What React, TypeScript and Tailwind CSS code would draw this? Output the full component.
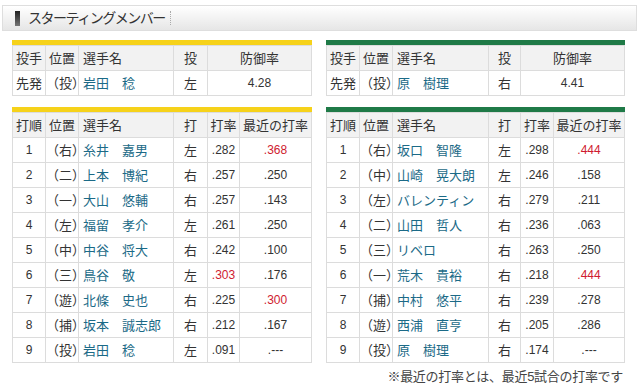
type Batter = {
  order: number
  pos: string
  name: string
  hand: string
  avg: string
  recent: string
  avgHot?: boolean
  recentHot?: boolean
}

type Side = {
  accent: string
  pitcher: { name: string; hand: string; era: string }
  batters: Batter[]
}

const tigers: Side = {
  accent: 'bg-[#f6d21a]',
  pitcher: { name: '岩田　稔', hand: '左', era: '4.28' },
  batters: [
    { order: 1, pos: '（右）', name: '糸井　嘉男', hand: '左', avg: '.282', recent: '.368', recentHot: true },
    { order: 2, pos: '（二）', name: '上本　博紀', hand: '右', avg: '.257', recent: '.250' },
    { order: 3, pos: '（一）', name: '大山　悠輔', hand: '右', avg: '.257', recent: '.143' },
    { order: 4, pos: '（左）', name: '福留　孝介', hand: '左', avg: '.261', recent: '.250' },
    { order: 5, pos: '（中）', name: '中谷　将大', hand: '右', avg: '.242', recent: '.100' },
    { order: 6, pos: '（三）', name: '鳥谷　敬', hand: '左', avg: '.303', recent: '.176', avgHot: true },
    { order: 7, pos: '（遊）', name: '北條　史也', hand: '右', avg: '.225', recent: '.300', recentHot: true },
    { order: 8, pos: '（捕）', name: '坂本　誠志郎', hand: '右', avg: '.212', recent: '.167' },
    { order: 9, pos: '（投）', name: '岩田　稔', hand: '左', avg: '.091', recent: '.---' },
  ],
}

const swallows: Side = {
  accent: 'bg-[#1f7a47]',
  pitcher: { name: '原　樹理', hand: '右', era: '4.41' },
  batters: [
    { order: 1, pos: '（右）', name: '坂口　智隆', hand: '左', avg: '.298', recent: '.444', recentHot: true },
    { order: 2, pos: '（中）', name: '山崎　晃大朗', hand: '左', avg: '.246', recent: '.158' },
    { order: 3, pos: '（左）', name: 'バレンティン', hand: '右', avg: '.279', recent: '.211' },
    { order: 4, pos: '（二）', name: '山田　哲人', hand: '右', avg: '.236', recent: '.063' },
    { order: 5, pos: '（三）', name: 'リベロ', hand: '右', avg: '.263', recent: '.250' },
    { order: 6, pos: '（一）', name: '荒木　貴裕', hand: '右', avg: '.218', recent: '.444', recentHot: true },
    { order: 7, pos: '（捕）', name: '中村　悠平', hand: '右', avg: '.239', recent: '.278' },
    { order: 8, pos: '（遊）', name: '西浦　直亨', hand: '右', avg: '.205', recent: '.286' },
    { order: 9, pos: '（投）', name: '原　樹理', hand: '右', avg: '.174', recent: '.---' },
  ],
}

const th = 'h-[25px] border border-[#dcdcdc] bg-[#f2f2f2] font-normal p-0'
const td = 'h-[25px] border border-[#dcdcdc] bg-white p-0'
const num = 'text-[12px]'
const hot = 'text-[#cf1b30]'

function PitcherTable({ side, widths }: { side: Side; widths: number[] }) {
  const { pitcher } = side
  return (
    <div>
      <div className={`h-[5px] ${side.accent}`} />
      <table className="w-full table-fixed border-collapse">
        <colgroup>
          {widths.map((w, i) => (
            <col key={i} style={{ width: w }} />
          ))}
          <col />
        </colgroup>
        <thead>
          <tr>
            <th className={`${th} pl-[3px] text-left`}>投手</th>
            <th className={`${th} pl-[3px] text-left`}>位置</th>
            <th className={`${th} pl-[4px] text-left`}>選手名</th>
            <th className={`${th} text-center`}>投</th>
            <th className={`${th} text-center`}>防御率</th>
          </tr>
        </thead>
        <tbody>
          <tr>
            <td className={`${td} pl-[3px]`}>先発</td>
            <td className={`${td} whitespace-nowrap`}>（投）</td>
            <td className={`${td} pl-[4px] text-[#1b6a87]`}>{pitcher.name}</td>
            <td className={`${td} text-center`}>{pitcher.hand}</td>
            <td className={`${td} ${num} text-center`}>{pitcher.era}</td>
          </tr>
        </tbody>
      </table>
    </div>
  )
}

function BatterTable({ side, widths }: { side: Side; widths: number[] }) {
  return (
    <div>
      <div className={`h-[5px] ${side.accent}`} />
      <table className="w-full table-fixed border-collapse">
        <colgroup>
          {widths.map((w, i) => (
            <col key={i} style={{ width: w }} />
          ))}
          <col />
        </colgroup>
        <thead>
          <tr>
            <th className={`${th} pl-[3px] text-left`}>打順</th>
            <th className={`${th} pl-[3px] text-left`}>位置</th>
            <th className={`${th} pl-[4px] text-left`}>選手名</th>
            <th className={`${th} text-center`}>打</th>
            <th className={`${th} text-center`}>打率</th>
            <th className={`${th} text-center whitespace-nowrap`}>最近の打率</th>
          </tr>
        </thead>
        <tbody>
          {side.batters.map((b) => (
            <tr key={b.order}>
              <td className={`${td} ${num} text-center`}>{b.order}</td>
              <td className={`${td} whitespace-nowrap`}>{b.pos}</td>
              <td className={`${td} pl-[4px] text-[#1b6a87] whitespace-nowrap`}>{b.name}</td>
              <td className={`${td} text-center`}>{b.hand}</td>
              <td className={`${td} ${num} text-center ${b.avgHot ? hot : ''}`}>{b.avg}</td>
              <td className={`${td} ${num} text-center ${b.recentHot ? hot : ''}`}>{b.recent}</td>
            </tr>
          ))}
        </tbody>
      </table>
    </div>
  )
}

export default function App() {
  return (
    <div
      className="w-[639px] h-[388px] bg-white text-[13px] leading-none text-[#333]"
      style={{ fontFamily: '"Liberation Sans", "Noto Sans CJK JP", sans-serif' }}
    >
      {/* Section header */}
      <div className="pt-[5px] pl-[2px] pr-[2px]">
        <div className="h-[26px] border border-[#dedede] bg-gradient-to-b from-white to-[#e6e6e6] flex items-center">
          <div className="ml-[12px] w-[5px] h-[15px] bg-gradient-to-b from-[#222] to-[#777]" />
          <span className="ml-[8px] text-[14px] tracking-[-1.5px] text-[#333]">スターティングメンバー</span>
          <span className="ml-[5px] h-[14px] border-l border-dotted border-[#aaa]" />
        </div>
      </div>

      {/* Two team columns */}
      <div className="flex pl-[12px] pt-[9px] gap-[14px]">
        <div className="w-[300px] flex flex-col gap-[11px]">
          <PitcherTable side={tigers} widths={[33, 33, 95, 34]} />
          <BatterTable side={tigers} widths={[33, 33, 95, 34, 32]} />
        </div>
        <div className="w-[299px] flex flex-col gap-[11px]">
          <PitcherTable side={swallows} widths={[33, 33, 96, 32]} />
          <BatterTable side={swallows} widths={[33, 33, 96, 32, 33]} />
          <p className="text-right text-[13px] tracking-[-0.3px] -mt-[4px] pr-[2px] text-[#444]">※最近の打率とは、最近5試合の打率です</p>
        </div>
      </div>
    </div>
  )
}
